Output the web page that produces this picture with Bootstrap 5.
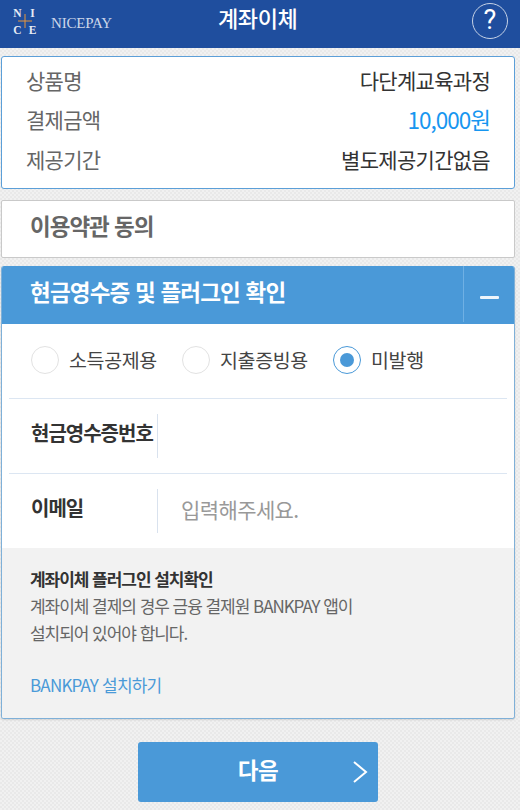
<!DOCTYPE html>
<html lang="ko">
<head>
    <meta charset="UTF-8">
    <meta name="viewport" content="width=device-width, initial-scale=1.0">
    <title>계좌이체</title>
    <link href="https://cdn.jsdelivr.net/npm/bootstrap@5.3.0/dist/css/bootstrap.min.css" rel="stylesheet">
    <script src="https://cdn.jsdelivr.net/npm/bootstrap@5.3.0/dist/js/bootstrap.bundle.min.js"></script>
    <style>
        html, body { height: 100%; }
        body {
            font-family: "Noto Sans CJK KR", "Noto Sans", sans-serif;
            background-color: #eeeeee;
            background-image: repeating-conic-gradient(#e9e9e9 0 25%, #f1f1f1 0 50%);
            background-size: 4px 4px;
            overflow: hidden;
        }
        .top-bar { height: 48px; background: #1f4e9e; padding: 0 12px 0 10px; }
        .logo-box { width: 30px; height: 33px; margin-top: -5px; font: 700 11.5px/16.5px "Liberation Serif", serif; color: #e6ebf5; position: relative; flex-wrap: wrap; }
        .logo-box span { width: 15px; text-align: center; }
        .logo-box svg { position: absolute; left: 7px; top: 8px; }
        .logo-name { font: 15px "Liberation Serif", serif; color: #cbd6e9; margin-left: 11px; margin-top: -2px; letter-spacing: -0.2px; }
        .top-title { font-size: 22px; color: #fff; letter-spacing: -0.4px; line-height: 1; left: 218px; top: 6px; font-weight: 500; }
        .help-btn { width: 36px; height: 36px; margin-top: -7px; border: 1.5px solid #c5d2e6; border-radius: 50%; color: #fff; font: 400 27px/33px Roboto, sans-serif; text-align: center; }
        .page-body { padding: 8px 5px 0 1px; }
        .info-box { height: 133px; border: 1px solid #5c9fd8; border-radius: 3px; background: #fff; padding: 3.5px 24px; margin-bottom: 11px; }
        .info-row { height: 39.5px; font-size: 21px; letter-spacing: -0.7px; }
        .info-key { color: #666; }
        .info-val { color: #333; }
        .info-price { color: #1796f0; font-size: 22.5px; letter-spacing: -1px; }
        .terms-box { height: 58px; border: 1px solid #c9c9c9; border-radius: 2px; background: #fff; padding: 0 0 7px 28px; margin-bottom: 8px; font-size: 22.5px; font-weight: 700; color: #666; letter-spacing: -1px; }
        .pay-panel { height: 453px; border: 1px solid #7fb0d8; border-top: 0; border-radius: 3px; background: #fff; overflow: hidden; box-shadow: 0 1px 2px rgba(0,0,0,.12); }
        .pay-head { height: 58px; background: #4a99d8; color: #fff; font-size: 22.5px; font-weight: 700; letter-spacing: -0.8px; padding-left: 28px; padding-bottom: 7px; }
        .pay-toggle { width: 51px; height: 56px; border-left: 1px solid #6fb0e4; align-self: flex-start; }
        .pay-toggle i { display: block; width: 19px; height: 3px; border-radius: 1px; background: #eef5fb; margin-top: 6px; }
        .radio-row { height: 75px; margin: 0 7px; padding-left: 22px; border-bottom: 1px solid #dce6f2; font-size: 19.5px; color: #444; letter-spacing: -0.35px; }
        .radio-dot { width: 28px; height: 28px; border: 1.5px solid #e2e2e2; border-radius: 50%; margin-right: 10px; flex: none; }
        .radio-dot.on { border-color: #4a99d8; }
        .radio-dot.on i { display: block; width: 14px; height: 14px; border-radius: 50%; background: #4a99d8; }
        .radio-item { width: 151px; padding-bottom: 3px; white-space: nowrap; }
        .form-line { height: 74px; margin: 0 7px; }
        .form-line + .form-line { height: 75px; border-top: 1px solid #dce6f2; }
        .form-key { width: 149px; height: 44px; border-right: 1px solid #d9e2ee; padding: 0 0 6px 22px; font-size: 20px; font-weight: 700; color: #333; letter-spacing: -1px; white-space: nowrap; }
        .form-hint { padding: 0 0 2px 23px; font-size: 21px; color: #999; letter-spacing: -0.6px; }
        .guide-box { background: #f2f2f2; height: 170px; padding: 18px 0 0 28px; font-size: 17px; line-height: 27px; color: #666; letter-spacing: -1.04px; }
        .guide-title { font-weight: 700; color: #333; line-height: 26px; }
        .guide-link { color: #4a9ad8; margin-top: 25px; letter-spacing: -0.8px; }
        .next-wrap { padding-top: 23px; }
        .next-btn { width: 240px; height: 60px; padding-bottom: 4px; background: #4a99d8; border-radius: 3px; color: #fff; font-size: 22.5px; font-weight: 700; letter-spacing: -0.5px; }
        .next-btn svg { right: 9px; top: 18px; }
    </style>
</head>
<body>
    <header class="top-bar d-flex justify-content-between align-items-center position-relative">
        <div class="d-flex align-items-center">
            <div class="logo-box d-flex">
                <span>N</span><span>I</span><span>C</span><span>E</span>
                <svg width="16" height="16" viewBox="0 0 16 16"><path d="M8 1v14M1 8h14" stroke="#e8953a" stroke-width="1"/></svg>
            </div>
            <div class="logo-name">NICEPAY</div>
        </div>
        <div class="top-title position-absolute">계좌이체</div>
        <div class="help-btn">?</div>
    </header>

    <main class="page-body">
        <section class="info-box">
            <div class="info-row d-flex justify-content-between align-items-center"><span class="info-key">상품명</span><span class="info-val">다단계교육과정</span></div>
            <div class="info-row d-flex justify-content-between align-items-center"><span class="info-key">결제금액</span><span class="info-price">10,000원</span></div>
            <div class="info-row d-flex justify-content-between align-items-center"><span class="info-key">제공기간</span><span class="info-val">별도제공기간없음</span></div>
        </section>

        <section class="terms-box d-flex align-items-center">이용약관 동의</section>

        <section class="pay-panel">
            <div class="pay-head d-flex justify-content-between align-items-center">
                <span>현금영수증 및 플러그인 확인</span>
                <div class="pay-toggle d-flex justify-content-center align-items-center"><i></i></div>
            </div>
            <div class="radio-row d-flex align-items-center">
                <div class="radio-item d-flex align-items-center"><div class="radio-dot"></div>소득공제용</div>
                <div class="radio-item d-flex align-items-center"><div class="radio-dot"></div>지출증빙용</div>
                <div class="radio-item d-flex align-items-center"><div class="radio-dot on d-flex justify-content-center align-items-center"><i></i></div>미발행</div>
            </div>
            <div class="form-line d-flex align-items-center">
                <div class="form-key d-flex align-items-center">현금영수증번호</div>
            </div>
            <div class="form-line d-flex align-items-center">
                <div class="form-key d-flex align-items-center">이메일</div>
                <div class="form-hint">입력해주세요.</div>
            </div>
            <div class="guide-box">
                <div class="guide-title">계좌이체 플러그인 설치확인</div>
                <div>계좌이체 결제의 경우 금융 결제원 BANKPAY 앱이</div>
                <div>설치되어 있어야 합니다.</div>
                <div class="guide-link">BANKPAY 설치하기</div>
            </div>
        </section>

        <div class="next-wrap d-flex">
            <div class="next-btn d-flex justify-content-center align-items-center position-relative mx-auto">
                다음
                <svg class="position-absolute" width="16" height="24" viewBox="0 0 16 24"><path d="M1 2l12 10L1 22" fill="none" stroke="#fff" stroke-width="2"/></svg>
            </div>
        </div>
    </main>
</body>
</html>
